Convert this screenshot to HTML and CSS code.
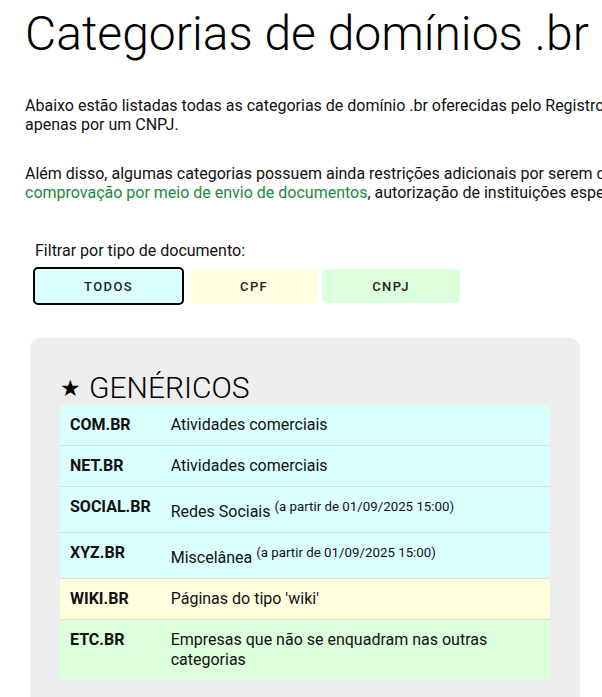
FILE: index.html
```html
<!DOCTYPE html>
<html lang="pt-BR">
<head>
<meta charset="utf-8">
<title>Categorias de domínios .br</title>
<link rel="stylesheet" href="styles.css">
</head>
<body>
<main class="page">
  <h1 class="title">Categorias de domínios .br</h1>
  <p class="intro">Abaixo estão listadas todas as categorias de domínio .br oferecidas pelo Registro.br. Algumas podem ser registradas por CPF ou CNPJ, e outras<br>apenas por um CNPJ.</p>
  <p class="intro second">Além disso, algumas categorias possuem ainda restrições adicionais por serem destinadas a públicos específicos, exigindo<br><a class="link" href="#">comprovação por meio de envio de documentos</a>, autorização de instituições específicas ou outros requisitos.</p>

  <section class="filter">
    <div class="filter-label">Filtrar por tipo de documento:</div>
    <div class="filter-buttons">
      <button class="btn btn-all active">TODOS</button>
      <button class="btn btn-cpf">CPF</button>
      <button class="btn btn-cnpj">CNPJ</button>
    </div>
  </section>

  <section class="card">
    <h2 class="card-title"><span class="star">★</span>GENÉRICOS</h2>
    <table class="cats">
      <tr class="row-all"><td class="name">COM.BR</td><td class="desc">Atividades comerciais</td></tr>
      <tr class="row-all"><td class="name">NET.BR</td><td class="desc">Atividades comerciais</td></tr>
      <tr class="row-all"><td class="name">SOCIAL.BR</td><td class="desc">Redes Sociais <sup>(a partir de 01/09/2025 15:00)</sup></td></tr>
      <tr class="row-all"><td class="name">XYZ.BR</td><td class="desc">Miscelânea <sup>(a partir de 01/09/2025 15:00)</sup></td></tr>
      <tr class="row-cpf"><td class="name">WIKI.BR</td><td class="desc">Páginas do tipo 'wiki'</td></tr>
      <tr class="row-cnpj"><td class="name">ETC.BR</td><td class="desc">Empresas que não se enquadram nas outras categorias</td></tr>
    </table>
  </section>
</main>
</body>
</html>
```

FILE: styles.css
```css
html, body {
  margin: 0;
  padding: 0;
  overflow-x: hidden;
  background: #ffffff;
}

body {
  font-family: Roboto, "Liberation Sans", sans-serif;
  color: #111111;
  font-size: 16px;
}

.page {
  padding: 0 0 40px 25px;
}

.title {
  font-weight: 300;
  font-size: 48px;
  line-height: normal;
  margin: 5px 0 0 0;
  color: #000000;
  white-space: nowrap;
}

.intro {
  width: 1100px;
  margin: 34px 0 0 0;
  line-height: normal;
  white-space: nowrap;
}

.intro.second {
  margin-top: 30px;
}

.link {
  color: #1a8a3a;
  text-decoration: none;
}

.filter {
  margin: 39px 0 0 8px;
}

.filter-label {
  padding-left: 2px;
  color: #111111;
}

.filter-buttons {
  display: flex;
  align-items: center;
  gap: 4px;
  margin-top: 7px;
}

.btn {
  font-family: Roboto, "Liberation Sans", sans-serif;
  font-size: 13px;
  font-weight: 500;
  letter-spacing: 1.4px;
  color: #222222;
  height: 34px;
  padding: 0 50px;
  border: none;
  border-radius: 5px;
  cursor: pointer;
}

.btn.active {
  height: 38px;
  padding: 0 49px;
  margin-right: 2px;
  border: 2px solid #000000;
}

.btn-all { background: #dbffff; }
.btn-cpf { background: #ffffe0; }
.btn-cnpj { background: #dcffdc; }

.card {
  width: 550px;
  box-sizing: border-box;
  margin: 33px 0 0 5px;
  padding: 32px 30px 30px 30px;
  background: #eeeeee;
  border-radius: 10px;
}

.card-title {
  margin: 0;
  font-weight: 300;
  font-size: 30px;
  line-height: normal;
  color: #000000;
}

.star {
  font-family: "DejaVu Sans", sans-serif;
  font-size: 23px;
  vertical-align: 2px;
  margin: 0 8px 0 0;
}

.cats {
  width: 100%;
  border-collapse: collapse;
}

.cats td {
  padding: 10px;
  vertical-align: top;
  line-height: 20px;
  border-bottom: 1px solid #dddddd;
}

.cats tr:last-child td {
  border-bottom: none;
}

.name {
  width: 80px;
  font-weight: 700;
}

.desc sup {
  font-size: 13.3px;
  line-height: 20px;
  vertical-align: 6px;
}

.row-all { background: #dbffff; }
.row-cpf { background: #ffffe0; }
.row-cnpj { background: #dcffdc; }
```
